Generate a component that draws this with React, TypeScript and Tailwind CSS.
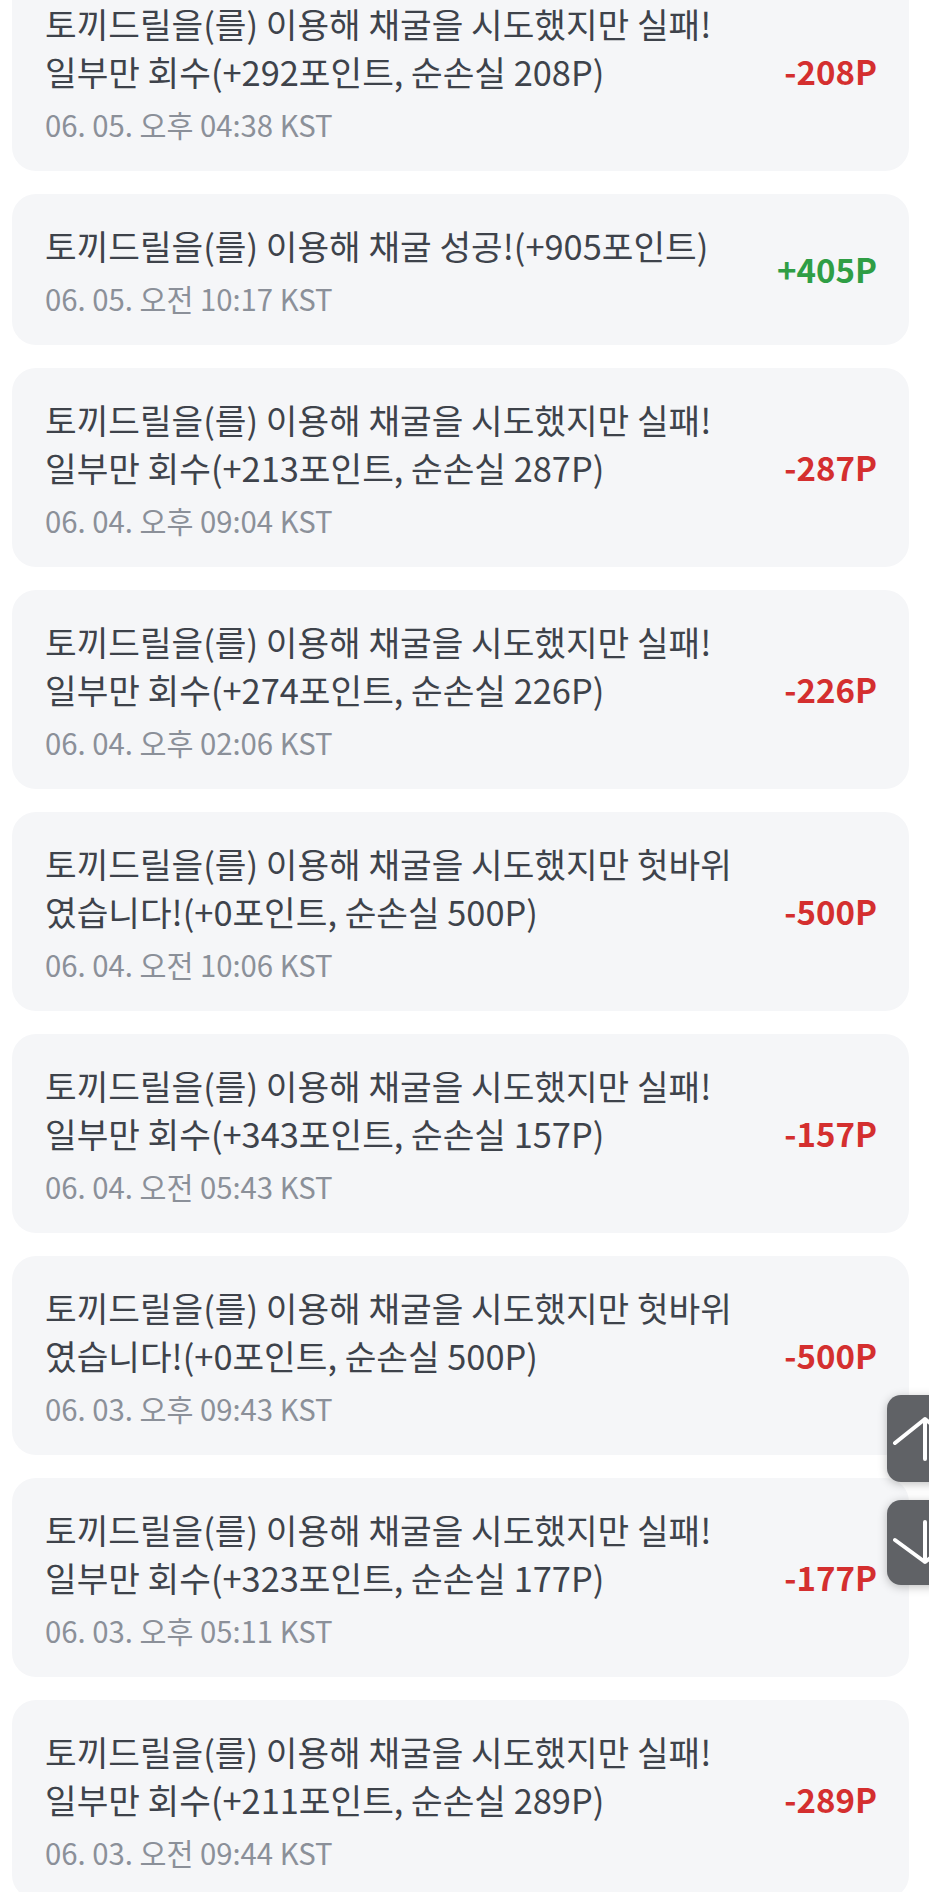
import React from "react";

type Entry = {
  lines: string[];
  date: string;
  amount: string;
  gain?: boolean;
};

const FAIL = "토끼드릴을(를) 이용해 채굴을 시도했지만 실패!";
const EMPTY = "토끼드릴을(를) 이용해 채굴을 시도했지만 헛바위";

const entries: Entry[] = [
  { lines: [FAIL, "일부만 회수(+292포인트, 순손실 208P)"], date: "06. 05. 오후 04:38 KST", amount: "-208P" },
  { lines: ["토끼드릴을(를) 이용해 채굴 성공!(+905포인트)"], date: "06. 05. 오전 10:17 KST", amount: "+405P", gain: true },
  { lines: [FAIL, "일부만 회수(+213포인트, 순손실 287P)"], date: "06. 04. 오후 09:04 KST", amount: "-287P" },
  { lines: [FAIL, "일부만 회수(+274포인트, 순손실 226P)"], date: "06. 04. 오후 02:06 KST", amount: "-226P" },
  { lines: [EMPTY, "였습니다!(+0포인트, 순손실 500P)"], date: "06. 04. 오전 10:06 KST", amount: "-500P" },
  { lines: [FAIL, "일부만 회수(+343포인트, 순손실 157P)"], date: "06. 04. 오전 05:43 KST", amount: "-157P" },
  { lines: [EMPTY, "였습니다!(+0포인트, 순손실 500P)"], date: "06. 03. 오후 09:43 KST", amount: "-500P" },
  { lines: [FAIL, "일부만 회수(+323포인트, 순손실 177P)"], date: "06. 03. 오후 05:11 KST", amount: "-177P" },
  { lines: [FAIL, "일부만 회수(+211포인트, 순손실 289P)"], date: "06. 03. 오전 09:44 KST", amount: "-289P" },
];

function HistoryCard({ entry }: { entry: Entry }) {
  return (
    <div className="flex items-center justify-between rounded-[24px] bg-[#f5f6f8] pl-[33px] pr-[32px] py-[27px]">
      <div className="flex flex-col">
        {entry.lines.map((l, i) => (
          <div key={i} className="text-[34.4px] leading-[48px] text-[#3e434b] whitespace-nowrap">
            {l}
          </div>
        ))}
        <div className="mt-[9px] text-[29.3px] leading-[40px] text-[#8b9099] whitespace-nowrap">{entry.date}</div>
      </div>
      <div
        className={
          entry.gain
            ? "text-[33px] font-bold text-[#2f9e45]"
            : "text-[33px] font-bold text-[#d42f2f]"
        }
      >
        {entry.amount}
      </div>
    </div>
  );
}

export default function App() {
  return (
    <div
      className="relative w-full min-h-screen overflow-hidden bg-white"
      style={{ fontFamily: '"Noto Sans CJK KR", "Noto Sans", sans-serif' }}
    >
      <div className="-mt-[28px] flex flex-col gap-[23px] pl-[12px] pr-[20px]">
        {entries.map((e, i) => (
          <HistoryCard key={i} entry={e} />
        ))}
      </div>

      {/* 위/아래 이동 버튼 (화면 밖으로 반쯤 나감) */}
      <button className="absolute left-[887px] top-[1395px] h-[87px] w-[80px] rounded-[14px] bg-[#606266] shadow-[0_2px_10px_rgba(0,0,0,0.25)]">
        <svg width="80" height="87" viewBox="0 0 80 87" fill="none" stroke="white" strokeWidth="4" strokeLinecap="round" strokeLinejoin="round">
          <path d="M8 48 L38 24 L68 48 M38 24 V64" />
        </svg>
      </button>
      <button className="absolute left-[887px] top-[1500px] h-[85px] w-[80px] rounded-[14px] bg-[#606266] shadow-[0_2px_10px_rgba(0,0,0,0.25)]">
        <svg width="80" height="85" viewBox="0 0 80 85" fill="none" stroke="white" strokeWidth="4" strokeLinecap="round" strokeLinejoin="round">
          <path d="M8 40 L38 62 L68 40 M38 62 V22" />
        </svg>
      </button>
    </div>
  );
}
